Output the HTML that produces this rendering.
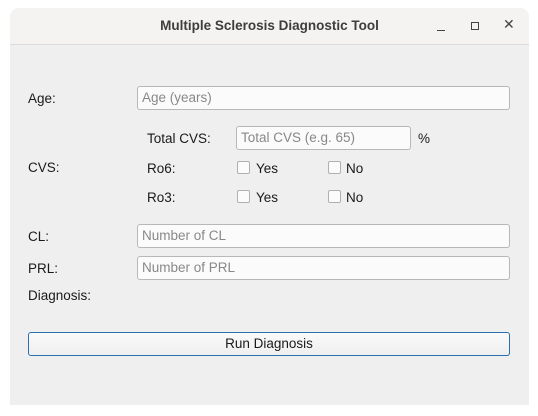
<!DOCTYPE html>
<html><head><meta charset="utf-8"><style>
body{margin:0;width:538px;height:416px;background:#fff;position:relative;overflow:hidden;font-family:"Liberation Sans",sans-serif;font-size:13px;color:#1a1a1a}
.win{position:absolute;left:10px;top:8px;width:519px;height:397px;background:#efefef;border-radius:9px 9px 0 0;overflow:hidden}
.tb{position:absolute;left:0;top:0;width:100%;height:36px;background:#f4f3f1;border-bottom:1px solid #dcdcdc}
.t{position:absolute;left:0;width:100%;top:10px;text-align:center;font-weight:bold;font-size:13.5px;color:#3d3d3d}
.a{position:absolute}
.in{position:absolute;background:#fbfbfb;border:1px solid #b8b8b8;border-radius:3px;box-sizing:border-box;height:24px;color:#888;padding:3px 4px;font-size:13.5px}
.cb{position:absolute;width:13px;height:13px;border:1px solid #b0b0b0;background:#fbfbfb;box-sizing:border-box;border-radius:2px}
.l{position:absolute;font-size:13.5px}
</style></head><body>
<div class="win"><div class="tb"><div class="t">Multiple Sclerosis Diagnostic Tool</div>
<div class="a" style="left:427px;top:22px;width:8px;height:1px;background:#444"></div>
<div class="a" style="left:461px;top:14px;width:8px;height:8px;border:1px solid #444;box-sizing:border-box"></div>
<div class="a" style="left:493px;top:8px;font-size:14px;color:#444">✕</div>
</div></div>
<div class="l" style="left:28px;top:91px">Age:</div>
<div class="in" style="left:137px;top:86px;width:373px">Age (years)</div>
<div class="l" style="left:147px;top:131px">Total CVS:</div>
<div class="in" style="left:236px;top:126px;width:175px">Total CVS (e.g. 65)</div>
<div class="l" style="left:418px;top:131px">%</div>
<div class="l" style="left:28px;top:160px">CVS:</div>
<div class="l" style="left:147px;top:161px">Ro6:</div>
<div class="cb" style="left:237px;top:161px"></div><div class="l" style="left:256px;top:161px">Yes</div>
<div class="cb" style="left:328px;top:161px"></div><div class="l" style="left:346px;top:161px">No</div>
<div class="l" style="left:147px;top:190px">Ro3:</div>
<div class="cb" style="left:237px;top:190px"></div><div class="l" style="left:256px;top:190px">Yes</div>
<div class="cb" style="left:328px;top:190px"></div><div class="l" style="left:346px;top:190px">No</div>
<div class="l" style="left:28px;top:229px">CL:</div>
<div class="in" style="left:137px;top:224px;width:373px">Number of CL</div>
<div class="l" style="left:28px;top:261px">PRL:</div>
<div class="in" style="left:137px;top:256px;width:373px">Number of PRL</div>
<div class="l" style="left:28px;top:288px">Diagnosis:</div>
<div class="a" style="left:28px;top:332px;width:482px;height:24px;box-sizing:border-box;border:1px solid #2a6fb0;border-radius:3px;background:linear-gradient(#fafafa,#efefef);text-align:center;line-height:22px;font-size:13.5px">Run Diagnosis</div>
</body></html>
